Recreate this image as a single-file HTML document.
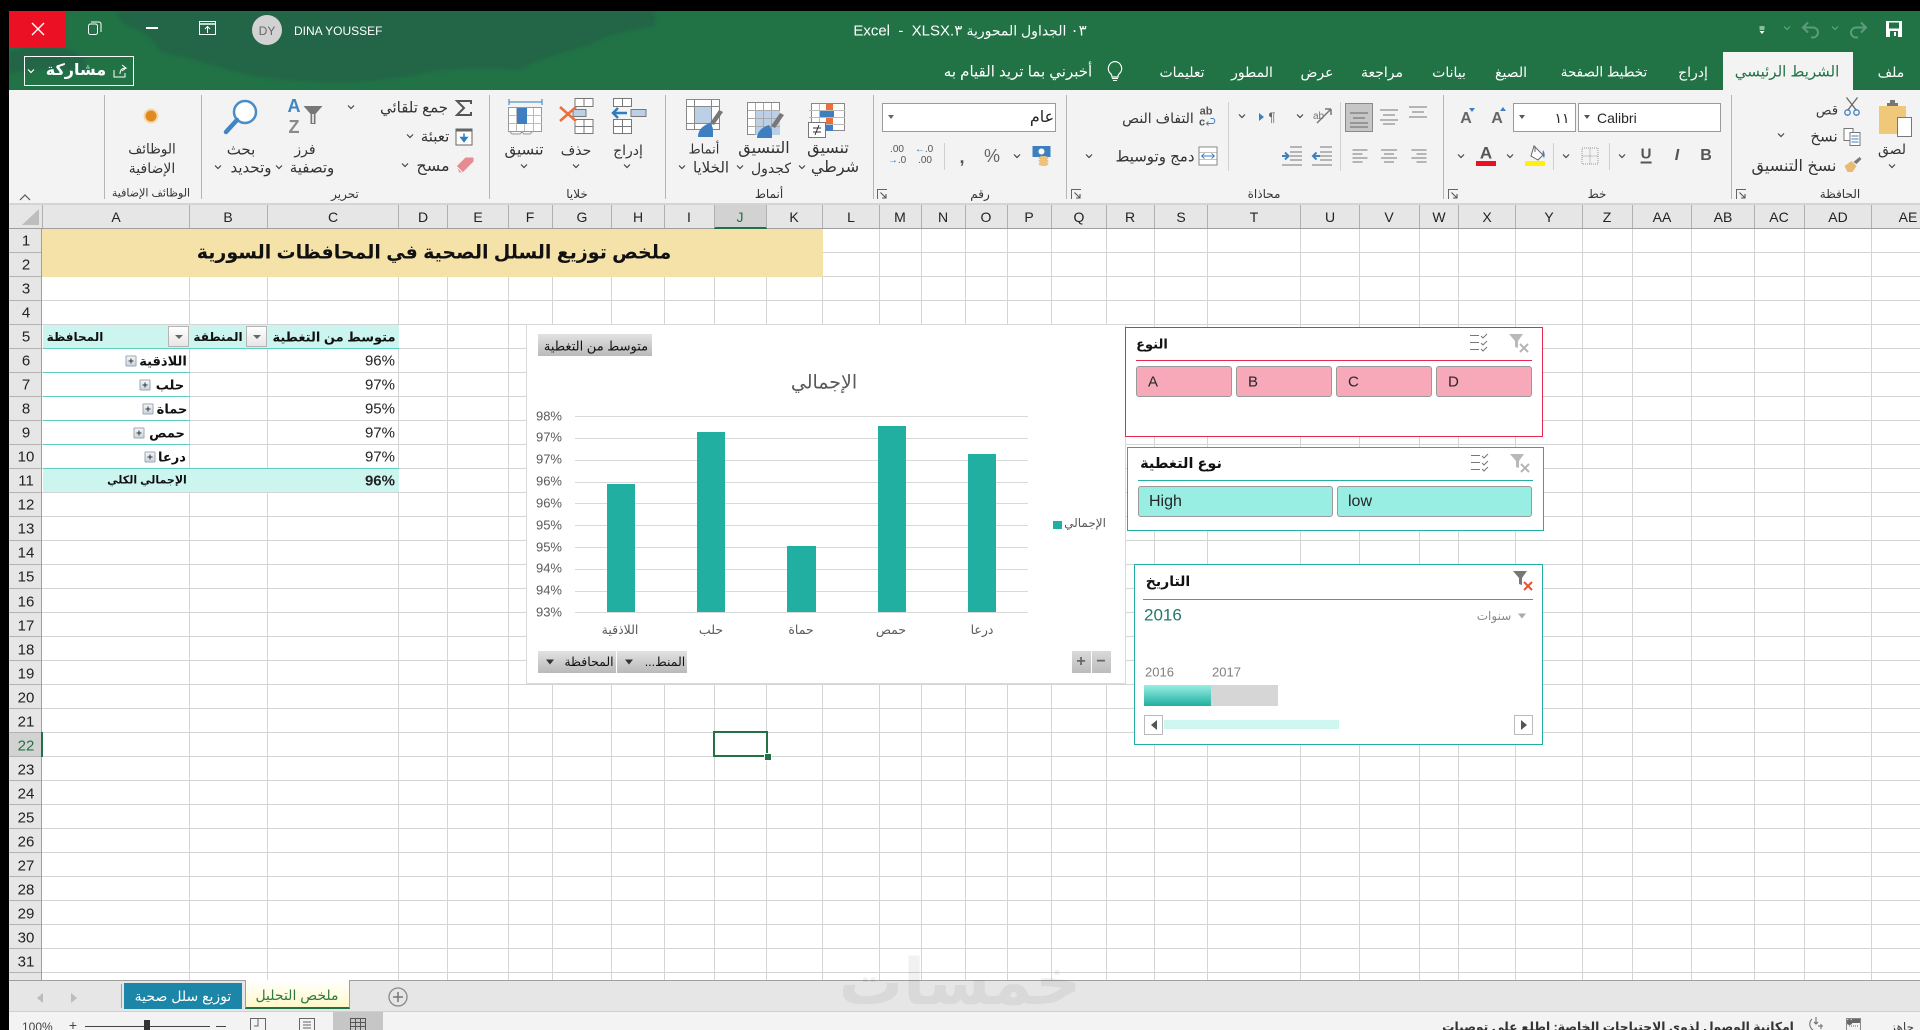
<!DOCTYPE html>
<html lang="ar"><head><meta charset="utf-8"><title>Excel</title>
<style>
html,body{margin:0;padding:0;width:1920px;height:1030px;overflow:hidden;background:#fff}
body{position:relative;font-family:"Liberation Sans","DejaVu Sans",sans-serif;color:#262626}
.t{position:absolute;transform:translate(-50%,-50%);white-space:nowrap;font-size:12px;line-height:1}
.r{position:absolute;transform:translateY(-50%);white-space:nowrap;line-height:1;direction:rtl}
.l{position:absolute;transform:translateY(-50%);white-space:nowrap;line-height:1}
.c{position:absolute;transform:translate(-50%,-50%);overflow:visible}
.a{position:absolute;overflow:visible}
.b{position:absolute;box-sizing:border-box}
.w{color:#fff}
.rh{position:absolute;left:26px;transform:translate(-50%,calc(-50% + 1px));font-size:15px;line-height:1;color:#222}
.ch2{position:absolute;top:217px;transform:translate(-50%,-50%);font-size:14px;line-height:1;color:#222}
.pc{position:absolute;left:395px;transform:translate(-100%,calc(-50% + 1px));font-size:15px;line-height:1;color:#222}
.pb{position:absolute;width:11px;height:11px;box-sizing:border-box;border:1px solid #9aa7b5;background:linear-gradient(#f2f5f8,#cdd5de);transform:translate(-50%,-50%);border-radius:1px}
.pb:before{content:"";position:absolute;left:2px;right:2px;top:4px;height:1px;background:#333}
.pb:after{content:"";position:absolute;top:2px;bottom:2px;left:4px;width:1px;background:#333}
.dd{position:absolute;top:326px;width:21px;height:21px;box-sizing:border-box;border:1px solid #b5b5b5;background:linear-gradient(#fff,#e6e6e6)}
.dd:after{content:"";position:absolute;left:6px;top:8px;border:4px solid transparent;border-top:4px solid #666;border-bottom:0}
.fb{position:absolute;height:22px;background:linear-gradient(#e2e2e2,#b9b9b9);box-sizing:border-box}
.sb{position:absolute;box-sizing:border-box;border:1px solid #9a9a9a;border-radius:3px;height:31px}
.tri{position:absolute;width:0;height:0;border-left:4px solid transparent;border-right:4px solid transparent;border-top:5px solid #333;transform:translate(-50%,-50%)}
.sep{position:absolute;width:1px;background:#b5b5b5;top:95px;height:104px}
.sep2{position:absolute;width:1px;background:#d0d0d0}
.yl{position:absolute;left:562px;transform:translate(-100%,-50%);font-size:13px;line-height:1;color:#595959}
.xl{position:absolute;top:630px;transform:translate(-50%,-50%);font-size:12.500px;line-height:1;color:#595959;white-space:nowrap}
.bar{position:absolute;background:#20AFA0}
.rb{font-size:12px;color:#333}
.rl{font-size:15px;color:#333}
.tb{font-size:14px}
</style></head><body>
<svg width="0" height="0" style="position:absolute">
<defs>
<g id="chev"><path d="M1 1l3 3 3-3" fill="none" stroke="#444" stroke-width="1.2"/></g>
<g id="launch"><path d="M.5 10V.5H10" fill="none" stroke="#666"/><path d="M3.500 3.500L9 9M9 5v4H5" fill="none" stroke="#555" stroke-width="1.1"/></g>
<g id="multi"><path d="M0 1.500h9M0 8.500h9M0 15.500h9" stroke="#777" stroke-width="1"/><path d="M11 2l2 2 4-4M11 9l2 2 4-4M11 15l2 2 4-4" stroke="#777" fill="none" stroke-width="1"/></g>
<g id="funnel"><path d="M0 0h14l-5 7v7l-3-1V7z" fill="#b9b9b9"/><path d="M11 10l8 8M19 10l-8 8" stroke="#b4b4b4" stroke-width="2"/></g>
</defs></svg>

<!-- title bar -->
<div class="b" style="left:0;top:0;width:1920px;height:90px;background:#217346"></div>
<svg class="a" style="left:0;top:0" width="800" height="90"><defs><filter id="bl"><feGaussianBlur stdDeviation="2"/></filter></defs>
<path filter="url(#bl)" fill="#246547" d="M114 11H655V26Q610 32 590 45Q540 58 520 70Q470 66 430 72Q380 84 320 82Q260 80 230 70Q190 58 160 52Q150 32 125 25Z"/>
<path filter="url(#bl)" fill="#246547" d="M9 52Q40 40 70 50Q92 60 84 72Q50 66 9 74Z"/>
</svg>
<div class="b" style="left:0;top:0;width:1920px;height:11px;background:#000"></div>
<div class="b" style="left:9px;top:11px;width:57px;height:37px;background:#EC1024"></div>
<svg class="c" style="left:38px;top:29px" width="14" height="14"><path d="M1 1l12 12M13 1L1 13" stroke="#fff" stroke-width="1.400"/></svg>
<svg class="c" style="left:95px;top:28px" width="14" height="14"><rect x=".5" y="3" width="9" height="10.500" rx="2" fill="none" stroke="#fff"/><path d="M3 1h8a2 2 0 0 1 2 2v8" fill="none" stroke="#fff"/></svg>
<div class="b" style="left:146px;top:27px;width:12px;height:1.500px;background:#fff"></div>
<svg class="c" style="left:208px;top:28px" width="18" height="14"><rect x=".5" y=".5" width="16" height="13" fill="none" stroke="#fff"/><path d="M1 3h15" stroke="#fff" stroke-width="1.500"/><path d="M8.500 12V6M6 8l2.500-2.500L11 8" stroke="#fff" fill="none"/></svg>
<div class="b" style="left:252px;top:15px;width:30px;height:30px;border-radius:50%;background:#D2D2D2"></div>
<span class="t" style="left:267px;top:31px;font-size:12px;color:#666">DY</span>
<span class="l w" style="left:294px;top:31px;font-size:12px">DINA YOUSSEF</span>
<span class="t w" dir="ltr" style="left:970px;top:31px;font-size:15px">Excel &nbsp;- &nbsp;XLSX.<bdi>٣</bdi> <bdi style="font-size:14px">الجداول المحورية</bdi> <bdi>٠٣</bdi></span>
<!-- QAT -->
<svg class="c" style="left:1762px;top:30px" width="7" height="8"><path d="M1 1h5M1 3h5" stroke="#fff"/><path d="M1 5l2.500 3L6 5z" fill="#fff"/></svg>
<svg class="c" style="left:1787px;top:28px" width="8" height="5"><path d="M1 1l3 3 3-3" fill="none" stroke="#6fa58a"/></svg>
<svg class="c" style="left:1811px;top:30px" width="18" height="17"><path d="M6 1L1 6l5 5M1.500 6H11a5 5 0 0 1 5 5v0a5 5 0 0 1-5 5H9" fill="none" stroke="#5c9c7d" stroke-width="2"/></svg>
<svg class="c" style="left:1835px;top:28px" width="8" height="5"><path d="M1 1l3 3 3-3" fill="none" stroke="#6fa58a"/></svg>
<svg class="c" style="left:1858px;top:30px" width="18" height="17"><path d="M12 1l5 5-5 5M16.500 6H7a5 5 0 0 0-5 5v0a5 5 0 0 0 5 5h2" fill="none" stroke="#5c9c7d" stroke-width="2"/></svg>
<svg class="c" style="left:1894px;top:29px" width="16" height="16"><path d="M0 0h16v16H0z" fill="#fff"/><rect x="3" y="1.500" width="10" height="6" fill="#217346"/><rect x="4" y="10" width="8" height="6" fill="#217346"/><rect x="8" y="11" width="2" height="4" fill="#fff"/></svg>
<!-- share -->
<div class="b" style="left:24px;top:56px;width:110px;height:30px;border:1px solid #fff"></div>
<svg class="c" style="left:31px;top:71px" width="8" height="5"><path d="M1 1l3 3 3-3" fill="none" stroke="#fff" stroke-width="1.200"/></svg>
<span class="t w" style="left:76px;top:71px;font-size:16px;font-weight:bold">مشاركة</span>
<svg class="c" style="left:120px;top:71px" width="14" height="14"><path d="M1 6v7h11V9M7 10c0-4 2-6 6-6L9 1M13 4L9 7" fill="none" stroke="#fff"/></svg>
<!-- tabs -->
<div class="b" style="left:1723px;top:52px;width:130px;height:38px;background:#F3F3F3"></div>
<span class="t w tb" style="left:1891px;top:72px">ملف</span>
<span class="t" style="left:1787px;top:72px;color:#217346;font-size:15px">الشريط الرئيسي</span>
<span class="t w tb" style="left:1693px;top:72px">إدراج</span>
<span class="t w" style="left:1604px;top:72px;font-size:13.500px">تخطيط الصفحة</span>
<span class="t w tb" style="left:1511px;top:72px">الصيغ</span>
<span class="t w tb" style="left:1449px;top:72px">بيانات</span>
<span class="t w tb" style="left:1382px;top:72px">مراجعة</span>
<span class="t w tb" style="left:1317px;top:72px">عرض</span>
<span class="t w tb" style="left:1252px;top:72px">المطور</span>
<span class="t w tb" style="left:1182px;top:72px">تعليمات</span>
<svg class="c" style="left:1115px;top:71px" width="16" height="21"><path d="M8 1a7 7 0 0 0-4 12.500c1 1 1 2 1 3h6c0-1 0-2 1-3A7 7 0 0 0 8 1z" fill="none" stroke="#fff" stroke-width="1.200"/><path d="M5 18h6M6 20h4" stroke="#fff"/></svg>
<span class="t w" style="left:1018px;top:72px;font-size:15px">أخبرني بما تريد القيام به</span>

<!-- ribbon -->
<div class="b" style="left:0;top:90px;width:1920px;height:114px;background:#F3F3F3"></div>
<div class="b" style="left:0;top:203px;width:1920px;height:2px;background:#d4d4d4"></div>
<div class="sep" style="left:104px"></div><div class="sep" style="left:201px"></div><div class="sep" style="left:489px"></div><div class="sep" style="left:665px"></div><div class="sep" style="left:873px"></div><div class="sep" style="left:1066px"></div><div class="sep" style="left:1443px"></div><div class="sep" style="left:1731px"></div>
<svg class="c" style="left:25px;top:197px" width="12" height="8"><path d="M1 7l5-5 5 5" fill="none" stroke="#555" stroke-width="1.200"/></svg>
<span class="t rb" style="left:151px;top:194px;font-size:11px">الوظائف الإضافية</span>
<span class="t rb" style="left:345px;top:194px">تحرير</span>
<span class="t rb" style="left:577px;top:194px">خلايا</span>
<span class="t rb" style="left:769px;top:194px">أنماط</span>
<span class="t rb" style="left:980px;top:194px">رقم</span>
<span class="t rb" style="left:1264px;top:194px">محاذاة</span>
<span class="t rb" style="left:1597px;top:194px">خط</span>
<span class="t rb" style="left:1840px;top:194px">الحافظة</span>
<svg class="a" style="left:877px;top:189px" width="10" height="10"><use href="#launch"/></svg>
<svg class="a" style="left:1071px;top:189px" width="10" height="10"><use href="#launch"/></svg>
<svg class="a" style="left:1448px;top:189px" width="10" height="10"><use href="#launch"/></svg>
<svg class="a" style="left:1736px;top:189px" width="10" height="10"><use href="#launch"/></svg>

<!-- addins -->
<svg class="c" style="left:151px;top:116px" width="16" height="16"><circle cx="8" cy="8" r="7.500" fill="#F4D9A8"/><circle cx="8" cy="8" r="5.500" fill="#E28A22"/></svg>
<span class="t rb" style="left:152px;top:149px;font-size:13.500px">الوظائف</span>
<span class="t rb" style="left:152px;top:168px;font-size:14px">الإضافية</span>
<!-- search -->
<svg class="c" style="left:241px;top:117px" width="36" height="36"><circle cx="22" cy="13" r="11" fill="#fff" stroke="#4A8BC8" stroke-width="2.500"/><path d="M14 21L3 33" stroke="#3F85C4" stroke-width="4.500" stroke-linecap="round"/></svg>
<span class="t rl" style="left:241px;top:150px">بحث</span>
<span class="t rl" style="left:251px;top:168px">وتحديد</span>
<svg class="c" style="left:218px;top:167px" width="8" height="5"><use href="#chev"/></svg>
<!-- sort -->
<span class="t" style="left:294px;top:106px;font-size:18px;font-weight:bold;color:#3F85C4">A</span>
<span class="t" style="left:294px;top:127px;font-size:18px;font-weight:bold;color:#8a8a8a">Z</span>
<svg class="c" style="left:313px;top:115px" width="19" height="18"><path d="M0 0h19l-7 8v10h-5V8z" fill="#777"/><path d="M8.500 8v9h2V8z" fill="#ddd"/></svg>
<span class="t rb" style="left:305px;top:149px;font-size:14px">فرز</span>
<span class="t rl" style="left:312px;top:168px">وتصفية</span>
<svg class="c" style="left:279px;top:167px" width="8" height="5"><use href="#chev"/></svg>
<!-- sum -->
<svg class="c" style="left:464px;top:108px" width="16" height="16"><path d="M15 4V1H1l7 7-7 7h14v-3" fill="none" stroke="#555" stroke-width="2"/></svg>
<span class="t rl" style="left:414px;top:108px">جمع تلقائي</span>
<svg class="c" style="left:351px;top:107px" width="8" height="5"><use href="#chev"/></svg>
<svg class="c" style="left:464px;top:137px" width="17" height="17"><rect x=".5" y=".5" width="16" height="16" fill="#fff" stroke="#666"/><path d="M1 2h15" stroke="#666" stroke-width="2"/><path d="M8.500 5v7M5.500 9l3 4 3-4z" fill="#2F7DC1" stroke="#2F7DC1" stroke-width="1.500"/></svg>
<span class="t rl" style="left:435px;top:137px">تعبئة</span>
<svg class="c" style="left:410px;top:136px" width="8" height="5"><use href="#chev"/></svg>
<svg class="c" style="left:465px;top:165px" width="17" height="15"><path d="M0 9L9 0h8v4L6 15H3z" fill="#E88A92"/><path d="M0 9l6 6" stroke="#fff"/></svg>
<span class="t rl" style="left:433px;top:167px;font-size:16px">مسح</span>
<svg class="c" style="left:405px;top:165px" width="8" height="5"><use href="#chev"/></svg>
<!-- cells: format -->
<svg class="a" style="left:508px;top:98px" width="35" height="38"><path d="M1 1v6M34 1v6M1 4h33" stroke="#2F7DC1" fill="none"/><rect x=".5" y="9.500" width="33" height="24" fill="#fff" stroke="#999"/><path d="M8.500 10v23M16.500 10v23M25.500 10v23M1 17.500h33M1 25.500h33" stroke="#bbb"/><rect x="9" y="10" width="10" height="16" fill="#3F7FBF"/><path d="M2 34l2 2h8l3-3M14 34l2 2h6l3-3" fill="none" stroke="#999"/></svg>
<span class="t rl" style="left:524px;top:150px">تنسيق</span>
<svg class="c" style="left:524px;top:166px" width="8" height="5"><use href="#chev"/></svg>
<!-- delete -->
<svg class="a" style="left:559px;top:98px" width="36" height="38"><rect x="16" y=".5" width="18" height="8" fill="#fff" stroke="#777"/><path d="M25 1v7" stroke="#777"/><rect x="16" y="21.500" width="18" height="14" fill="#fff" stroke="#777"/><path d="M25 22v13M16 28.500h18" stroke="#777"/><rect x="14" y="11.500" width="13" height="7" fill="#BBD0E6" stroke="#777"/><path d="M1 9l16 14M17 9L1 23" stroke="#E8703A" stroke-width="2.500"/></svg>
<span class="t rb" style="left:576px;top:150px;font-size:14px">حذف</span>
<svg class="c" style="left:576px;top:166px" width="8" height="5"><use href="#chev"/></svg>
<!-- insert -->
<svg class="a" style="left:612px;top:98px" width="36" height="38"><rect x="1.500" y=".5" width="18" height="8" fill="#fff" stroke="#777"/><path d="M10.500 1v7" stroke="#777"/><rect x="1.500" y="21.500" width="18" height="14" fill="#fff" stroke="#777"/><path d="M10.500 22v13M1.500 28.500h18" stroke="#777"/><rect x="19" y="11.500" width="15" height="7" fill="#BBD0E6" stroke="#777"/><path d="M1 15h14M6 10l-5 5 5 5" stroke="#2F7DC1" stroke-width="2.500" fill="none"/></svg>
<span class="t rb" style="left:628px;top:150px;font-size:14px">إدراج</span>
<svg class="c" style="left:627px;top:166px" width="8" height="5"><use href="#chev"/></svg>
<!-- styles -->
<svg class="a" style="left:686px;top:99px" width="38" height="38"><rect x=".5" y=".5" width="33" height="30" fill="#fff" stroke="#888"/><rect x="8" y="7" width="18" height="18" fill="#BBD0E6"/><path d="M8.500 1v29M25.500 1v29M1 7.500h32M1 24.500h32" stroke="#888"/><path d="M37 13L28 26l-4-2 9-13z" fill="#777"/><path d="M12 38c0-8 6-12 12-14 2 3 3 4 3 8v6z" fill="#3F7FBF"/></svg>
<span class="t rb" style="left:704px;top:149px;font-size:13px">أنماط</span>
<span class="t rl" style="left:711px;top:168px">الخلايا</span>
<svg class="c" style="left:682px;top:167px" width="8" height="5"><use href="#chev"/></svg>
<svg class="a" style="left:747px;top:102px" width="38" height="36"><rect x=".5" y=".5" width="32" height="32" fill="#fff" stroke="#888"/><rect x="8" y="8" width="25" height="25" fill="#BBD0E6"/><path d="M8.500 1v32M16.500 1v32M24.500 1v32M1 8.500h32M1 16.500h32M1 24.500h32" stroke="#aaa"/><path d="M37 13L28 26l-4-2 9-13z" fill="#777"/><path d="M10 36c0-7 6-11 12-13 2 3 3 4 3 8v5z" fill="#3F7FBF"/></svg>
<span class="t rl" style="left:764px;top:149px;font-size:16px">التنسيق</span>
<span class="t rb" style="left:771px;top:168px;font-size:14px">كجدول</span>
<svg class="c" style="left:740px;top:167px" width="8" height="5"><use href="#chev"/></svg>
<svg class="a" style="left:808px;top:103px" width="38" height="35"><rect x="3.500" y=".5" width="33" height="27" fill="#fff" stroke="#888"/><path d="M11.500 1v27M18.500 1v27M1 7.500h36M1 14.500h36M1 21.500h36" stroke="#bbb"/><rect x="18" y="1" width="7" height="6" fill="#E8703A"/><rect x="12" y="8" width="14" height="6" fill="#3F7FBF"/><rect x="18" y="15" width="7" height="6" fill="#E8703A"/><rect x="18" y="22" width="7" height="6" fill="#3F7FBF"/><rect x=".5" y="19.500" width="17" height="15" fill="#fff" stroke="#777"/><path d="M5 25h8M5 29h8M11 22l-4 10" stroke="#333"/></svg>
<span class="t rl" style="left:828px;top:149px;font-size:16px">تنسيق</span>
<span class="t rl" style="left:835px;top:168px;font-size:16px">شرطي</span>
<svg class="c" style="left:802px;top:167px" width="8" height="5"><use href="#chev"/></svg>
<!-- number -->
<div class="b" style="left:882px;top:103px;width:174px;height:29px;background:#fff;border:1px solid #9a9a9a"></div>
<div class="tri" style="left:891px;top:117px;border-top-color:#666;border-left-width:3px;border-right-width:3px;border-top-width:4px"></div>
<span class="t" style="left:1042px;top:118px;font-size:16px">عام</span>
<span class="t" style="left:897px;top:150px;font-size:10px;color:#555">.00</span><span class="t" style="left:897px;top:161px;font-size:10px;color:#2F7DC1">&#8594;<span style="color:#555">.0</span></span>
<span class="t" style="left:924px;top:150px;font-size:10px;color:#2F7DC1">&#8592;<span style="color:#555">.0</span></span><span class="t" style="left:925px;top:161px;font-size:10px;color:#555">.00</span>
<div class="sep2" style="left:944px;top:143px;height:27px"></div>
<span class="t" style="left:962px;top:157px;font-size:18px;font-weight:bold;color:#555">,</span>
<span class="t" style="left:992px;top:156px;font-size:18px;color:#666">%</span>
<svg class="c" style="left:1017px;top:156px" width="8" height="5"><use href="#chev"/></svg>
<svg class="c" style="left:1042px;top:156px" width="19" height="20"><rect width="18" height="11" fill="#3F7FBF"/><circle cx="9" cy="5.500" r="3" fill="#fff"/><ellipse cx="11" cy="12" rx="5" ry="2" fill="#EFC27A"/><ellipse cx="11" cy="15" rx="5" ry="2" fill="#EFC27A"/><ellipse cx="11" cy="18" rx="5" ry="2" fill="#EFC27A"/></svg>
<!-- align -->
<svg class="c" style="left:1208px;top:118px" width="17" height="17"><path d="M7 14h6c3 0 3-5 0-5h-2M9 12l-2 2 2 2" fill="none" stroke="#3F7FBF"/></svg>
<span class="t" style="left:1206px;top:112px;font-size:11px;font-weight:bold;color:#555">ab</span><span class="t" style="left:1202px;top:123px;font-size:11px;font-weight:bold;color:#555">c</span>
<span class="t" style="left:1158px;top:118px;font-size:14px;color:#333">التفاف النص</span>
<svg class="c" style="left:1208px;top:156px" width="19" height="19"><rect x=".5" y=".5" width="18" height="18" fill="#fff" stroke="#888"/><path d="M1 6h17M1 13h17" stroke="#888"/><rect x="1" y="6" width="17" height="7" fill="#fff"/><path d="M3 9.500h13M3 9.500l3-2.500M3 9.500L6 12M16 9.500L13 7M16 9.500L13 12" stroke="#3F7FBF" fill="none"/></svg>
<span class="t rl" style="left:1155px;top:157px">دمج وتوسيط</span>
<svg class="c" style="left:1089px;top:156px" width="8" height="5"><use href="#chev"/></svg>
<div class="sep2" style="left:1228px;top:102px;height:69px"></div>
<span class="t" style="left:1272px;top:117px;font-size:13px;color:#666">¶</span><div class="b" style="left:1259px;top:113px;width:0;height:0;border:4px solid transparent;border-left:5px solid #3F7FBF"></div>
<svg class="c" style="left:1242px;top:116px" width="8" height="5"><use href="#chev"/></svg>
<svg class="c" style="left:1322px;top:117px" width="20" height="20"><path d="M19 2L13 2M19 2l0 6M19 2L5 16" stroke="#777" stroke-width="1.500" fill="none"/><text x="1" y="12" font-size="10" fill="#777" font-family="Liberation Sans">ab</text></svg>
<svg class="c" style="left:1300px;top:116px" width="8" height="5"><use href="#chev"/></svg>
<div class="sep2" style="left:1340px;top:102px;height:69px"></div>
<div class="b" style="left:1345px;top:103px;width:28px;height:29px;background:#C6C6C6;border:1px solid #8a8a8a"></div>
<svg class="c" style="left:1359px;top:120px" width="18" height="16"><path d="M0 1h18M3 6h12M0 11h18M0 15h18" stroke="#666"/></svg>
<svg class="c" style="left:1389px;top:117px" width="18" height="16"><path d="M0 1h18M3 6h12M0 11h18M3 15h12" stroke="#777"/></svg>
<svg class="c" style="left:1418px;top:112px" width="18" height="12"><path d="M0 1h18M3 6h12M0 11h18" stroke="#777"/></svg>
<svg class="c" style="left:1292px;top:156px" width="20" height="20"><path d="M8 1h12M8 6h12M8 10h12M8 14h12M0 19h20" stroke="#777"/><path d="M0 10h6M3 6.500L6.500 10 3 13.500" stroke="#3F7FBF" stroke-width="2" fill="none"/></svg>
<svg class="c" style="left:1322px;top:156px" width="20" height="20"><path d="M8 1h12M8 6h12M8 10h12M8 14h12M0 19h20" stroke="#777"/><path d="M8 10H1M4.500 6.500L1 10l3.500 3.500" stroke="#3F7FBF" stroke-width="2" fill="none"/></svg>
<svg class="c" style="left:1360px;top:156px" width="15" height="14"><path d="M0 1h15M0 5h10M0 9h15M0 13h10" stroke="#777"/></svg>
<svg class="c" style="left:1389px;top:156px" width="16" height="14"><path d="M0 1h16M3 5h10M0 9h16M3 13h10" stroke="#777"/></svg>
<svg class="c" style="left:1419px;top:156px" width="15" height="14"><path d="M0 1h15M5 5h10M0 9h15M5 13h10" stroke="#777"/></svg>
<!-- font -->
<span class="t" style="left:1466px;top:119px;font-size:16px;font-weight:bold;color:#666">A</span><div class="tri" style="left:1472px;top:110px;border-top-color:#3F7FBF;border-width:4px 3px 0"></div>
<span class="t" style="left:1497px;top:119px;font-size:16px;font-weight:bold;color:#666">A</span><div class="b" style="left:1500px;top:107px;width:0;height:0;border:3px solid transparent;border-bottom:4px solid #3F7FBF;border-top:0"></div>
<div class="b" style="left:1513px;top:103px;width:63px;height:29px;background:#fff;border:1px solid #9a9a9a"></div>
<div class="tri" style="left:1522px;top:117px;border-top-color:#555;border-width:4px 3px 0"></div>
<span class="t" style="left:1562px;top:118px;font-size:14px">١١</span>
<div class="b" style="left:1578px;top:103px;width:143px;height:29px;background:#fff;border:1px solid #9a9a9a"></div>
<div class="tri" style="left:1587px;top:117px;border-top-color:#555;border-width:4px 3px 0"></div>
<span class="l" style="left:1597px;top:118px;font-size:14px">Calibri</span>
<span class="t" style="left:1706px;top:156px;font-size:16px;font-weight:bold;color:#555">B</span>
<span class="t" style="left:1677px;top:156px;font-size:16px;font-weight:bold;font-style:italic;color:#555">I</span>
<span class="t" style="left:1646px;top:155px;font-size:15px;font-weight:bold;color:#555;border-bottom:2px solid #555">U</span>
<svg class="c" style="left:1622px;top:156px" width="8" height="5"><use href="#chev"/></svg>
<div class="sep2" style="left:1609px;top:143px;height:27px"></div>
<svg class="c" style="left:1590px;top:156px" width="17" height="17"><rect x=".5" y=".5" width="16" height="16" fill="none" stroke="#999" stroke-dasharray="1 1"/><path d="M8.500 1v16M1 8.500h16" stroke="#999" stroke-dasharray="1 1"/></svg>
<svg class="c" style="left:1566px;top:156px" width="8" height="5"><use href="#chev"/></svg>
<div class="sep2" style="left:1553px;top:143px;height:27px"></div>
<svg class="c" style="left:1536px;top:153px" width="18" height="16"><path d="M7 1l9 9-5 5-7-4z" fill="#fff" stroke="#666"/><path d="M8 1v6" stroke="#666"/><path d="M16 5c2 3 2 6 1 8-1-1-2-4-1-8z" fill="#3F7FBF"/></svg>
<div class="b" style="left:1525px;top:161px;width:20px;height:5px;background:#FFF200"></div>
<svg class="c" style="left:1510px;top:156px" width="8" height="5"><use href="#chev"/></svg>
<span class="t" style="left:1486px;top:153px;font-size:17px;font-weight:bold;color:#555">A</span>
<div class="b" style="left:1476px;top:161px;width:20px;height:5px;background:#EC1024"></div>
<svg class="c" style="left:1461px;top:156px" width="8" height="5"><use href="#chev"/></svg>
<!-- clipboard -->
<svg class="a" style="left:1879px;top:100px" width="35" height="38"><rect y="6" width="27" height="28" fill="#EFC87A"/><path d="M8 6V3h3V0h5v3h3v3z" fill="#777"/><rect x="18.500" y="17.500" width="14" height="19" fill="#fff" stroke="#777"/></svg>
<span class="t rb" style="left:1892px;top:149px;font-size:14px">لصق</span>
<svg class="c" style="left:1892px;top:166px" width="8" height="5"><use href="#chev"/></svg>
<svg class="c" style="left:1852px;top:107px" width="17" height="19"><path d="M3 0l10 13M14 0L4 13" stroke="#666" stroke-width="1.300"/><circle cx="4" cy="15" r="2.700" fill="none" stroke="#3F7FBF" stroke-width="1.300"/><circle cx="13" cy="15" r="2.700" fill="none" stroke="#3F7FBF" stroke-width="1.300"/></svg>
<span class="t rb" style="left:1827px;top:110px;font-size:13px">قص</span>
<svg class="c" style="left:1852px;top:137px" width="17" height="18"><rect x=".5" y=".5" width="9" height="12" fill="#fff" stroke="#777"/><rect x="6.500" y="4.500" width="10" height="13" fill="#fff" stroke="#777"/><path d="M8 8h7M8 11h7M8 14h7" stroke="#3F7FBF"/></svg>
<span class="t rl" style="left:1824px;top:137px">نسخ</span>
<svg class="c" style="left:1781px;top:135px" width="8" height="5"><use href="#chev"/></svg>
<svg class="c" style="left:1853px;top:165px" width="17" height="16"><path d="M0 9l7-5 5 5-4 6H3z" fill="#E8B970"/><path d="M9 5l6-5 2 2-5 5z" fill="#777"/></svg>
<span class="t rl" style="left:1794px;top:167px;font-size:16px">نسخ التنسيق</span>

<!-- column header -->
<div class="b" style="left:9px;top:205px;width:1911px;height:24px;background:#E6E6E6;border-bottom:1px solid #9f9f9f"></div>
<div class="b" style="left:714px;top:205px;width:53px;height:22px;background:#D2D2D2"></div>
<div class="b" style="left:714px;top:227px;width:53px;height:2px;background:#217346"></div>
<svg class="a" style="left:0;top:205px" width="40" height="24"><path d="M22 20L39 4V20z" fill="#BDBDBD"/></svg>

<!-- grid -->
<svg class="a" style="left:0;top:0" width="1920" height="1030" shape-rendering="crispEdges">
<path fill="none" stroke="#D4D4D4" d="M42 252.500H1920M42 276.500H1920M42 300.500H1920M42 324.500H1920M42 348.500H1920M42 372.500H1920M42 396.500H1920M42 420.500H1920M42 444.500H1920M42 468.500H1920M42 492.500H1920M42 516.500H1920M42 540.500H1920M42 564.500H1920M42 588.500H1920M42 612.500H1920M42 636.500H1920M42 660.500H1920M42 684.500H1920M42 708.500H1920M42 732.500H1920M42 756.500H1920M42 780.500H1920M42 804.500H1920M42 828.500H1920M42 852.500H1920M42 876.500H1920M42 900.500H1920M42 924.500H1920M42 948.500H1920M42 972.500H1920"/>
<path fill="none" stroke="#D4D4D4" d="M189.500 229V980M267.500 229V980M398.500 229V980M447.500 229V980M508.500 229V980M552.500 229V980M611.500 229V980M664.500 229V980M714.500 229V980M766.500 229V980M822.500 229V980M879.500 229V980M921.500 229V980M965.500 229V980M1007.500 229V980M1051.500 229V980M1106.500 229V980M1154.500 229V980M1207.500 229V980M1300.500 229V980M1359.500 229V980M1419.500 229V980M1458.500 229V980M1515.500 229V980M1582.500 229V980M1632.500 229V980M1691.500 229V980M1754.500 229V980M1804.500 229V980M1871.500 229V980"/>
<path fill="none" stroke="#B0B0B0" d="M42.500 205V228M189.500 205V228M267.500 205V228M398.500 205V228M447.500 205V228M508.500 205V228M552.500 205V228M611.500 205V228M664.500 205V228M714.500 205V228M766.500 205V228M822.500 205V228M879.500 205V228M921.500 205V228M965.500 205V228M1007.500 205V228M1051.500 205V228M1106.500 205V228M1154.500 205V228M1207.500 205V228M1300.500 205V228M1359.500 205V228M1419.500 205V228M1458.500 205V228M1515.500 205V228M1582.500 205V228M1632.500 205V228M1691.500 205V228M1754.500 205V228M1804.500 205V228M1871.500 205V228"/>
</svg>
<!-- row header -->
<div class="b" style="left:9px;top:229px;width:33px;height:751px;background:repeating-linear-gradient(#E6E6E6 0,#E6E6E6 23px,#B4B4B4 23px,#B4B4B4 24px);border-right:1px solid #9f9f9f"></div>
<div class="b" style="left:9px;top:733px;width:33px;height:23px;background:#D2D2D2"></div>
<div class="b" style="left:41px;top:732px;width:2px;height:25px;background:#217346"></div>
<span class="rh" style="top:240px">1</span><span class="rh" style="top:264px">2</span><span class="rh" style="top:288px">3</span><span class="rh" style="top:312px">4</span><span class="rh" style="top:336px">5</span><span class="rh" style="top:360px">6</span><span class="rh" style="top:384px">7</span><span class="rh" style="top:408px">8</span><span class="rh" style="top:432px">9</span><span class="rh" style="top:456px">10</span><span class="rh" style="top:480px">11</span><span class="rh" style="top:504px">12</span><span class="rh" style="top:528px">13</span><span class="rh" style="top:552px">14</span><span class="rh" style="top:576px">15</span><span class="rh" style="top:601px">16</span><span class="rh" style="top:625px">17</span><span class="rh" style="top:649px">18</span><span class="rh" style="top:673px">19</span><span class="rh" style="top:697px">20</span><span class="rh" style="top:721px">21</span><span class="rh" style="top:745px;color:#217346">22</span><span class="rh" style="top:769px">23</span><span class="rh" style="top:793px">24</span><span class="rh" style="top:817px">25</span><span class="rh" style="top:841px">26</span><span class="rh" style="top:865px">27</span><span class="rh" style="top:889px">28</span><span class="rh" style="top:913px">29</span><span class="rh" style="top:937px">30</span><span class="rh" style="top:961px">31</span>
<!-- column labels -->
<span class="ch2" style="left:116px">A</span><span class="ch2" style="left:228px">B</span><span class="ch2" style="left:333px">C</span><span class="ch2" style="left:423px">D</span><span class="ch2" style="left:478px">E</span><span class="ch2" style="left:530px">F</span><span class="ch2" style="left:582px">G</span><span class="ch2" style="left:638px">H</span><span class="ch2" style="left:689px">I</span><span class="ch2" style="left:740px;color:#217346">J</span><span class="ch2" style="left:794px">K</span><span class="ch2" style="left:851px">L</span><span class="ch2" style="left:900px">M</span><span class="ch2" style="left:943px">N</span><span class="ch2" style="left:986px">O</span><span class="ch2" style="left:1029px">P</span><span class="ch2" style="left:1079px">Q</span><span class="ch2" style="left:1130px">R</span><span class="ch2" style="left:1181px">S</span><span class="ch2" style="left:1254px">T</span><span class="ch2" style="left:1330px">U</span><span class="ch2" style="left:1389px">V</span><span class="ch2" style="left:1439px">W</span><span class="ch2" style="left:1487px">X</span><span class="ch2" style="left:1549px">Y</span><span class="ch2" style="left:1607px">Z</span><span class="ch2" style="left:1662px">AA</span><span class="ch2" style="left:1723px">AB</span><span class="ch2" style="left:1779px">AC</span><span class="ch2" style="left:1838px">AD</span><span class="ch2" style="left:1908px">AE</span>

<!-- title cell -->
<div class="b" style="left:42px;top:229px;width:781px;height:48px;background:#F5E2A9"></div>
<span class="t" style="left:434px;top:253px;font-size:19px;font-weight:bold;color:#111">ملخص توزيع السلل الصحية في المحافظات السورية</span>

<!-- pivot -->
<div class="b" style="left:43px;top:325px;width:356px;height:24px;background:#CCF5F0;border-bottom:1px solid #5FCDBF"></div>
<div class="b" style="left:43px;top:468px;width:356px;height:24px;background:#CCF5F0;border-top:1px solid #5FCDBF"></div>
<div class="b" style="left:43px;top:372px;width:147px;height:1px;background:#5FCDBF"></div>
<div class="b" style="left:43px;top:396px;width:147px;height:1px;background:#5FCDBF"></div>
<div class="b" style="left:43px;top:420px;width:147px;height:1px;background:#5FCDBF"></div>
<div class="b" style="left:43px;top:444px;width:147px;height:1px;background:#5FCDBF"></div>
<div class="dd" style="left:168px"></div><div class="dd" style="left:246px"></div>
<span class="t" style="left:75px;top:337px;font-size:12px;font-weight:bold;color:#111">المحافظة</span>
<span class="t" style="left:218px;top:337px;font-size:12px;font-weight:bold;color:#111">المنطقة</span>
<span class="t" style="left:334px;top:337px;font-size:13px;font-weight:bold;color:#111">متوسط من التغطية</span>
<span class="t" style="left:163px;top:361px;font-size:13px;font-weight:bold;color:#111">اللاذقية</span><div class="pb" style="left:131px;top:361px"></div>
<span class="t" style="left:170px;top:385px;font-size:13px;font-weight:bold;color:#111">حلب</span><div class="pb" style="left:145px;top:385px"></div>
<span class="t" style="left:172px;top:409px;font-size:13px;font-weight:bold;color:#111">حماة</span><div class="pb" style="left:148px;top:409px"></div>
<span class="t" style="left:167px;top:433px;font-size:13px;font-weight:bold;color:#111">حمص</span><div class="pb" style="left:139px;top:433px"></div>
<span class="t" style="left:172px;top:457px;font-size:13px;font-weight:bold;color:#111">درعا</span><div class="pb" style="left:150px;top:457px"></div>
<span class="t" style="left:147px;top:481px;font-size:11px;font-weight:bold;color:#111">الإجمالي الكلي</span>
<span class="pc" style="top:360px">96%</span><span class="pc" style="top:384px">97%</span><span class="pc" style="top:408px">95%</span><span class="pc" style="top:432px">97%</span><span class="pc" style="top:456px">97%</span><span class="pc" style="top:480px;font-weight:bold">96%</span>

<!-- chart -->
<div class="b" style="left:526px;top:324px;width:600px;height:360px;background:#fff;border:1px solid #D9D9D9"></div>
<div class="fb" style="left:538px;top:334px;width:114px"></div>
<span class="t" style="left:596px;top:346px;font-size:13px;color:#111">متوسط من التغطية</span>
<span class="t" style="left:824px;top:383px;font-size:19px;color:#595959">الإجمالي</span>
<svg class="a" style="left:0;top:0" width="1100" height="700" shape-rendering="crispEdges"><path fill="none" stroke="#D9D9D9" d="M575 416.500H1028M575 438.500H1028M575 460.500H1028M575 482.500H1028M575 503.500H1028M575 525.500H1028M575 547.500H1028M575 569.500H1028M575 591.500H1028M575 612.500H1028"/></svg>
<span class="yl" style="top:416px">98%</span><span class="yl" style="top:437px">97%</span><span class="yl" style="top:459px">97%</span><span class="yl" style="top:481px">96%</span><span class="yl" style="top:503px">96%</span><span class="yl" style="top:525px">95%</span><span class="yl" style="top:547px">95%</span><span class="yl" style="top:568px">94%</span><span class="yl" style="top:590px">94%</span><span class="yl" style="top:612px">93%</span>
<div class="bar" style="left:607px;top:484px;width:28px;height:128px"></div>
<div class="bar" style="left:697px;top:432px;width:28px;height:180px"></div>
<div class="bar" style="left:787px;top:546px;width:29px;height:66px"></div>
<div class="bar" style="left:878px;top:426px;width:28px;height:186px"></div>
<div class="bar" style="left:968px;top:454px;width:28px;height:158px"></div>
<span class="xl" style="left:620px">اللاذقية</span><span class="xl" style="left:711px">حلب</span><span class="xl" style="left:801px">حماة</span><span class="xl" style="left:891px">حمص</span><span class="xl" style="left:982px">درعا</span>
<div class="bar" style="left:1053px;top:521px;width:9px;height:8px"></div>
<span class="t" style="left:1085px;top:523px;font-size:12px;color:#595959">الإجمالي</span>
<div class="fb" style="left:538px;top:651px;width:78px"></div><div class="fb" style="left:617px;top:651px;width:70px"></div>
<div class="fb" style="left:1072px;top:651px;width:19px;background:linear-gradient(#d9d9d9,#bcbcbc)"></div><div class="fb" style="left:1092px;top:651px;width:19px;background:linear-gradient(#d9d9d9,#bcbcbc)"></div>
<div class="tri" style="left:550px;top:662px;border-width:5px 4px 0"></div><div class="tri" style="left:629px;top:662px;border-width:5px 4px 0"></div>
<span class="t" style="left:589px;top:662px;font-size:12.500px;color:#111">المحافظة</span>
<span class="t" dir="rtl" style="left:665px;top:662px;font-size:12.500px;color:#111">المنط...</span>
<span class="t" style="left:1081px;top:662px;font-size:16px;font-weight:bold;color:#666">+</span>
<span class="t" style="left:1101px;top:662px;font-size:16px;font-weight:bold;color:#666">−</span>

<!-- slicer 1 -->
<div class="b" style="left:1125px;top:327px;width:418px;height:110px;background:#fff;border:1px solid #E8284F"></div>
<span class="t" style="left:1152px;top:344px;font-size:13px;font-weight:bold;color:#111">النوع</span>
<div class="b" style="left:1136px;top:360px;width:396px;height:1px;background:#E8284F"></div>
<svg class="a" style="left:1470px;top:334px" width="18" height="18"><use href="#multi"/></svg>
<svg class="a" style="left:1509px;top:334px" width="19" height="19"><use href="#funnel"/></svg>
<div class="sb" style="left:1136px;top:366px;width:96px;background:#F7A8B9"></div><div class="sb" style="left:1236px;top:366px;width:96px;background:#F7A8B9"></div><div class="sb" style="left:1336px;top:366px;width:96px;background:#F7A8B9"></div><div class="sb" style="left:1436px;top:366px;width:96px;background:#F7A8B9"></div>
<span class="l" style="left:1148px;top:382px;font-size:15px">A</span><span class="l" style="left:1248px;top:382px;font-size:15px">B</span><span class="l" style="left:1348px;top:382px;font-size:15px">C</span><span class="l" style="left:1448px;top:382px;font-size:15px">D</span>
<!-- slicer 2 -->
<div class="b" style="left:1127px;top:447px;width:417px;height:84px;background:#fff;border:1px solid #20AFA0"></div>
<span class="t" style="left:1181px;top:464px;font-size:14.500px;font-weight:bold;color:#111">نوع التغطية</span>
<div class="b" style="left:1138px;top:480px;width:395px;height:1px;background:#20AFA0"></div>
<svg class="a" style="left:1471px;top:454px" width="18" height="18"><use href="#multi"/></svg>
<svg class="a" style="left:1510px;top:454px" width="19" height="19"><use href="#funnel"/></svg>
<div class="sb" style="left:1138px;top:486px;width:195px;background:#98EEE3"></div><div class="sb" style="left:1337px;top:486px;width:195px;background:#98EEE3"></div>
<span class="l" style="left:1149px;top:502px;font-size:16px">High</span><span class="l" style="left:1348px;top:502px;font-size:16px">low</span>
<!-- slicer 3 -->
<div class="b" style="left:1134px;top:564px;width:409px;height:181px;background:#fff;border:1px solid #20AFA0"></div>
<span class="t" style="left:1168px;top:581px;font-size:14px;font-weight:bold;color:#111">التاريخ</span>
<div class="b" style="left:1143px;top:599px;width:390px;height:1px;background:#20AFA0"></div>
<svg class="a" style="left:1513px;top:571px" width="20" height="20"><path d="M0 0h14l-5 7v7l-3-1V7z" fill="#777"/><path d="M11 11l8 8M19 11l-8 8" stroke="#E8532E" stroke-width="2"/></svg>
<span class="l" style="left:1144px;top:615px;font-size:17px;color:#217A6B">2016</span>
<span class="t" style="left:1494px;top:616px;font-size:12px;color:#8a8a8a">سنوات</span>
<div class="tri" style="left:1522px;top:616px;border-top-color:#aaa;border-width:5px 4px 0"></div>
<span class="l" style="left:1145px;top:672px;font-size:13px;color:#7f7f7f">2016</span><span class="l" style="left:1212px;top:672px;font-size:13px;color:#7f7f7f">2017</span>
<div class="b" style="left:1144px;top:685px;width:67px;height:21px;background:linear-gradient(#98EEE3,#20AFA0)"></div>
<div class="b" style="left:1211px;top:685px;width:67px;height:21px;background:#D6D6D6"></div>
<div class="b" style="left:1144px;top:715px;width:19px;height:20px;background:#fff;border:1px solid #bbb"></div>
<div class="b" style="left:1514px;top:715px;width:19px;height:20px;background:#fff;border:1px solid #bbb"></div>
<div class="b" style="left:1151px;top:720px;width:0;height:0;border:5px solid transparent;border-right:6px solid #555;border-left:0"></div>
<div class="b" style="left:1521px;top:720px;width:0;height:0;border:5px solid transparent;border-left:6px solid #555;border-right:0"></div>
<div class="b" style="left:1164px;top:720px;width:175px;height:9px;background:#CFF7F2"></div>

<!-- active cell -->
<div class="b" style="left:713px;top:731px;width:55px;height:26px;border:2px solid #217346"></div>
<div class="b" style="left:764px;top:753px;width:6px;height:6px;background:#217346;border:1px solid #fff;box-sizing:content-box"></div>

<!-- sheet tabs -->
<div class="b" style="left:0;top:980px;width:1920px;height:32px;background:#E6E6E6;border-top:1px solid #9f9f9f;border-bottom:1px solid #cfcfcf"></div>
<span class="t" style="left:960px;top:982px;font-size:64px;font-weight:bold;color:#000;opacity:.05">خمسات</span>
<div class="b" style="left:37px;top:993px;width:0;height:0;border:5px solid transparent;border-right:6px solid #bcbcbc;border-left:0"></div>
<div class="b" style="left:71px;top:993px;width:0;height:0;border:5px solid transparent;border-left:6px solid #bcbcbc;border-right:0"></div>
<div class="b" style="left:121px;top:984px;width:1px;height:24px;background:#9f9f9f"></div>
<div class="b" style="left:124px;top:983px;width:118px;height:26px;background:#1C86A8"></div>
<span class="t w" style="left:183px;top:996px;font-size:14px">توزيع سلل صحية</span>
<div class="b" style="left:245px;top:980px;width:105px;height:29px;background:linear-gradient(#fff,#FFF9C8);border:1px solid #9f9f9f;border-top:0;border-bottom:2px solid #217346"></div>
<span class="t" style="left:297px;top:995px;font-size:14px;color:#2f7a3f">ملخص التحليل</span>
<svg class="c" style="left:398px;top:997px" width="20" height="20"><circle cx="10" cy="10" r="9" fill="none" stroke="#888" stroke-width="1.300"/><path d="M10 5v10M5 10h10" stroke="#777" stroke-width="1.500"/></svg>

<!-- status -->
<div class="b" style="left:0;top:1012px;width:1920px;height:18px;background:#F3F3F3"></div>
<span class="l" style="left:22px;top:1027px;font-size:12px;color:#444">100%</span>
<span class="t" style="left:73px;top:1025px;font-size:14px;color:#444">+</span>
<div class="b" style="left:85px;top:1026px;width:125px;height:1px;background:#444"></div>
<div class="b" style="left:144px;top:1020px;width:6px;height:10px;background:#333"></div>
<div class="b" style="left:216px;top:1026px;width:10px;height:1px;background:#444"></div>
<svg class="a" style="left:250px;top:1018px" width="16" height="12"><path d="M.5 12V.5h15V12M8 1v7H4" fill="none" stroke="#666"/></svg>
<svg class="a" style="left:299px;top:1018px" width="16" height="12"><path d="M.5 12V.5h15V12" fill="none" stroke="#666"/><path d="M4 4h8M4 7h8M4 10h8" stroke="#666"/></svg>
<div class="b" style="left:333px;top:1012px;width:50px;height:18px;background:#C6C6C6"></div>
<svg class="a" style="left:350px;top:1018px" width="16" height="12"><path d="M.5 12V.5h15V12M1 4.500h15M1 8.500h15M5.500 1v11M10.500 1v11" fill="none" stroke="#555"/></svg>
<span class="t" style="left:1902px;top:1027px;font-size:12px;color:#444">جاهز</span>
<svg class="a" style="left:1846px;top:1018px" width="15" height="12"><circle cx="3.500" cy="4" r="3" fill="#666"/><rect x="6" y="1" width="9" height="4" fill="#666"/><rect x=".5" y=".5" width="14" height="12" fill="none" stroke="#888"/><path d="M3 8h9" stroke="#666" stroke-dasharray="1 1"/></svg>
<svg class="a" style="left:1806px;top:1017px" width="18" height="13"><path d="M6 2a7 7 0 0 0 1 11M10 0v7M8 5l2 2 2-2M12 9h5M15 7v5" fill="none" stroke="#666"/></svg>
<span class="t" style="left:1618px;top:1027px;font-size:12.300px;font-weight:bold;color:#333">إمكانية الوصول لذوي الاحتياجات الخاصة: اطلع على توصيات</span>

<!-- black left strip -->
<div class="b" style="left:0;top:0;width:9px;height:1030px;background:#000"></div>
</body></html>
